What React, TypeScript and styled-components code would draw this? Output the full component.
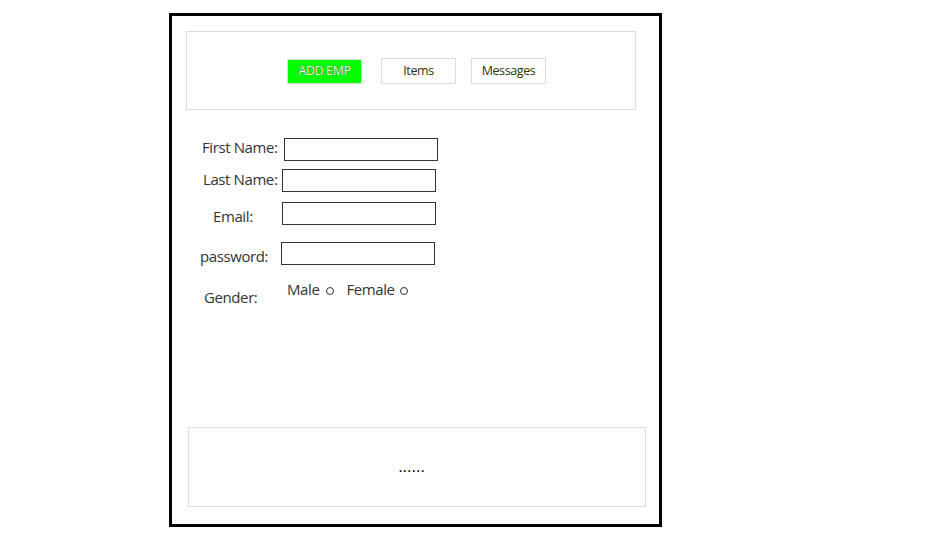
import React from "react";
import styled, { createGlobalStyle } from "styled-components";

const Global = createGlobalStyle`
  html, body { margin: 0; padding: 0; background: #fff; }
  body { font-family: "Open Sans", "Noto Sans", sans-serif; }
  * { box-sizing: border-box; }
`;

const Page = styled.div`
  padding: 13px 0 0 169px;
`;

const Frame = styled.div`
  width: 493px;
  height: 514px;
  border: 3px solid #000;
  display: flex;
  flex-direction: column;
`;

const Header = styled.nav`
  margin: 15px 0 0 14px;
  width: 450px;
  height: 79px;
  border: 1px solid #dddddd;
  display: flex;
  align-items: center;
  justify-content: center;
  padding-left: 11px;
`;

const NavButton = styled.button<{ $active?: boolean; $gap: number }>`
  width: 75px;
  height: ${(p) => (p.$active ? 25 : 26)}px;
  margin: ${(p) => (p.$active ? "1px" : "0")} ${(p) => p.$gap}px 0 0;
  padding: 1px 0 0;
  border: 1px solid #dcdcdc;
  background: ${(p) => (p.$active ? "#00ff00" : "#fff")};
  color: ${(p) => (p.$active ? "#f4f4f4" : "#333300")};
  text-shadow: ${(p) => (p.$active ? "0 0 1px #502000" : "none")};
  font-family: "Open Sans", "Noto Sans", sans-serif;
  font-size: 12.5px;
  letter-spacing: -0.4px;
  line-height: 1;
  cursor: pointer;
`;

const Form = styled.form`
  display: flex;
  flex-direction: column;
  padding-top: 28px;
`;

const Row = styled.div<{ $top: number; $indent: number }>`
  display: flex;
  align-items: flex-start;
  margin-top: ${(p) => p.$top}px;
  padding-left: ${(p) => p.$indent}px;
`;

const Label = styled.label<{ $width: number; $drop: number }>`
  width: ${(p) => p.$width}px;
  flex: none;
  font-size: 15px;
  letter-spacing: -0.4px;
  line-height: 16px;
  color: #333;
  padding-top: ${(p) => p.$drop}px;
  white-space: nowrap;
`;

const TextInput = styled.input`
  width: 154px;
  height: 23px;
  margin: 0;
  border: 1px solid #333;
  padding: 0 4px;
  font-size: 13px;
  outline: none;
`;

const Options = styled.div`
  display: flex;
  align-items: center;
  font-size: 15px;
  letter-spacing: -0.4px;
  line-height: 16px;
  color: #333;
`;

const Option = styled.label<{ $gap: number; $after: number }>`
  display: flex;
  align-items: center;
  gap: ${(p) => p.$gap}px;
  margin-right: ${(p) => p.$after}px;
`;

const Radio = styled.input`
  appearance: none;
  width: 8px;
  height: 8px;
  margin: 3px 0 0 0;
  border: 1px solid #333;
  border-radius: 50%;
  background: #fff;
`;

const Footer = styled.footer`
  margin: auto 13px 17px 16px;
  height: 80px;
  border: 1px solid #dddddd;
  display: flex;
  align-items: center;
  justify-content: center;
  padding-right: 11px;
  font-family: "Liberation Sans", sans-serif;
  font-size: 16px;
  color: #000;
`;

export default function App() {
  return (
    <>
      <Global />
      <Page>
        <Frame>
          <Header>
            <NavButton $active $gap={19}>ADD EMP</NavButton>
            <NavButton $gap={15}>Items</NavButton>
            <NavButton $gap={0}>Messages</NavButton>
          </Header>
          <Form onSubmit={(e) => e.preventDefault()}>
            <Row $top={0} $indent={30}>
              <Label $width={82} $drop={1}>First Name:</Label>
              <TextInput type="text" />
            </Row>
            <Row $top={8} $indent={31}>
              <Label $width={79} $drop={2}>Last Name:</Label>
              <TextInput type="text" />
            </Row>
            <Row $top={10} $indent={41}>
              <Label $width={69} $drop={6}>Email:</Label>
              <TextInput type="text" />
            </Row>
            <Row $top={17} $indent={28}>
              <Label $width={81} $drop={6}>password:</Label>
              <TextInput type="password" />
            </Row>
            <Row $top={16} $indent={32}>
              <Label $width={83} $drop={8}>Gender:</Label>
              <Options>
                <Option $gap={7} $after={12}>
                  Male <Radio type="radio" name="gender" />
                </Option>
                <Option $gap={5} $after={0}>
                  Female <Radio type="radio" name="gender" />
                </Option>
              </Options>
            </Row>
          </Form>
          <Footer>......</Footer>
        </Frame>
      </Page>
    </>
  );
}
